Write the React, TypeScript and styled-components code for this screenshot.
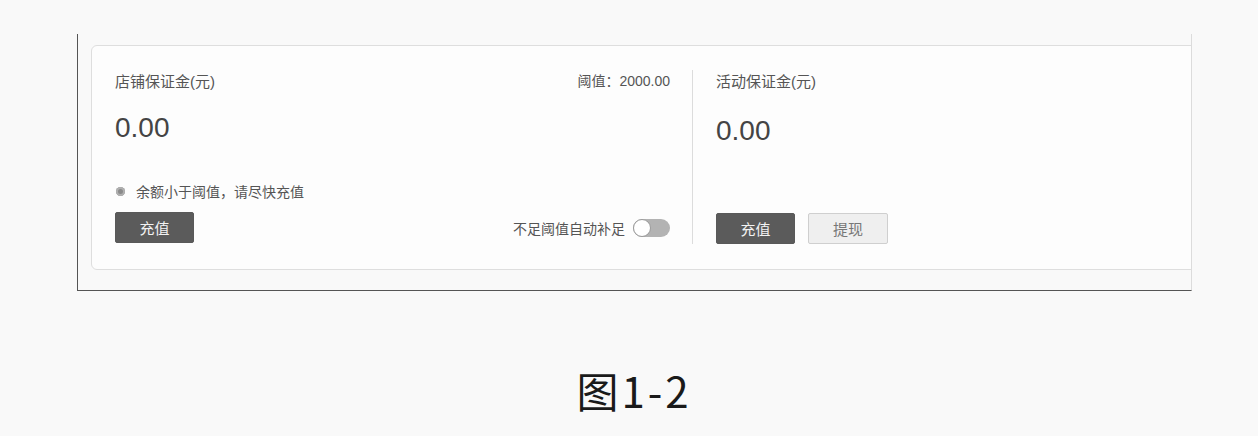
import styled, { createGlobalStyle } from "styled-components";

const GlobalStyle = createGlobalStyle`
  *, *::before, *::after {
    box-sizing: border-box;
  }
  html, body {
    margin: 0;
    padding: 0;
    background: #f9f9f9;
    font-family: "Liberation Sans", "Noto Sans CJK SC", sans-serif;
    color: #4a4a4a;
  }
`;

const Frame = styled.div`
  margin: 34px 0 0 77px;
  width: 1115px;
  height: 257px;
  border-left: 1px solid #555;
  border-right: 1px solid #dcdcdc;
  border-bottom: 1px solid #555;
  overflow: hidden;
`;

const Card = styled.div`
  margin: 11px 0 0 13px;
  width: 1130px;
  height: 225px;
  border: 1px solid #dedede;
  border-radius: 6px;
  background: #fdfdfd;
  display: flex;
`;

const Panel = styled.div<{ $divider?: boolean; $width?: number }>`
  width: ${(p) => (p.$width ? `${p.$width}px` : "auto")};
  flex: ${(p) => (p.$width ? "none" : "1")};
  margin: 24px 0 25px;
  padding: 0 22px 0 23px;
  border-right: ${(p) => (p.$divider ? "1px solid #dcdcdc" : "none")};
  display: flex;
  flex-direction: column;
`;

const HeadRow = styled.div`
  display: flex;
  justify-content: space-between;
  align-items: center;
  height: 20px;
  font-size: 15px;
  color: #555;
`;

const Threshold = styled.span`
  font-size: 14px;
  color: #555;
`;

const Amount = styled.div<{ $top?: number }>`
  margin-top: ${(p) => p.$top ?? 22}px;
  height: 32px;
  line-height: 32px;
  font-size: 28px;
  color: #444;
`;

const Notice = styled.div`
  margin-top: 38px;
  height: 18px;
  display: flex;
  align-items: center;
  gap: 11px;
  font-size: 14px;
  color: #555;
`;

const Dot = styled.span`
  width: 9px;
  height: 9px;
  margin-left: 1px;
  border-radius: 50%;
  background: #8a8a8a;
  box-shadow: inset 0 0 0 2px #b0b0b0;
`;

const ActionRow = styled.div<{ $top?: string }>`
  margin-top: ${(p) => p.$top ?? "12px"};
  display: flex;
  align-items: center;
  justify-content: space-between;
`;

const ButtonGroup = styled.div`
  display: flex;
  gap: 13px;
`;

const Button = styled.button<{ $primary?: boolean }>`
  width: ${(p) => (p.$primary ? "79px" : "80px")};
  height: 31px;
  border-radius: 2px;
  font-family: inherit;
  font-size: 15px;
  cursor: pointer;
  border: 1px solid ${(p) => (p.$primary ? "#595959" : "#cfcfcf")};
  background: ${(p) => (p.$primary ? "#5b5b5b" : "#efefef")};
  color: ${(p) => (p.$primary ? "#f2f2f2" : "#777")};
`;

const AutoFill = styled.label`
  display: flex;
  align-items: center;
  gap: 8px;
  font-size: 14px;
  color: #555;
`;

const Toggle = styled.span`
  position: relative;
  width: 37px;
  height: 18px;
  border-radius: 9px;
  background: #b3b3b3;
`;

const Knob = styled.span`
  position: absolute;
  left: 0;
  top: 0;
  width: 18px;
  height: 18px;
  border-radius: 50%;
  background: #fff;
  border: 1px solid #9a9a9a;
`;

const Caption = styled.div`
  margin-top: 74px;
  padding-left: 10px;
  text-align: center;
  font-family: "Noto Sans CJK SC", "Liberation Sans", sans-serif;
  font-size: 42px;
  letter-spacing: 3px;
  line-height: 50px;
  color: #1a1a1a;
`;

const App = () => {
  return (
    <>
      <GlobalStyle />
      <Frame>
        <Card>
          <Panel $divider $width={601}>
            <HeadRow>
              <span>店铺保证金(元)</span>
              <Threshold>阈值：2000.00</Threshold>
            </HeadRow>
            <Amount>0.00</Amount>
            <Notice>
              <Dot />
              余额小于阈值，请尽快充值
            </Notice>
            <ActionRow>
              <Button $primary>充值</Button>
              <AutoFill>
                不足阈值自动补足
                <Toggle>
                  <Knob />
                </Toggle>
              </AutoFill>
            </ActionRow>
          </Panel>
          <Panel>
            <HeadRow>
              <span>活动保证金(元)</span>
            </HeadRow>
            <Amount $top={25}>0.00</Amount>
            <ActionRow $top="auto">
              <ButtonGroup>
                <Button $primary>充值</Button>
                <Button>提现</Button>
              </ButtonGroup>
            </ActionRow>
          </Panel>
        </Card>
      </Frame>
      <Caption>图1-2</Caption>
    </>
  );
};

export default App;
